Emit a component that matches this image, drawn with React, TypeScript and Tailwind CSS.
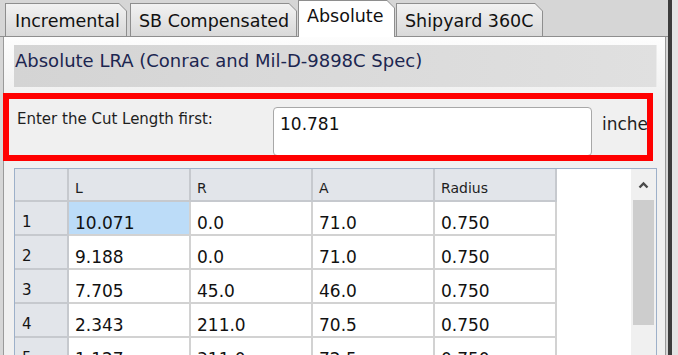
const rows = [
  { n: "1", l: "10.071", r: "0.0", a: "71.0", rad: "0.750", sel: true },
  { n: "2", l: "9.188", r: "0.0", a: "71.0", rad: "0.750" },
  { n: "3", l: "7.705", r: "45.0", a: "46.0", rad: "0.750" },
  { n: "4", l: "2.343", r: "211.0", a: "70.5", rad: "0.750" },
  { n: "5", l: "1.127", r: "311.0", a: "72.5", rad: "0.750" },
];

const clipOuter = "[clip-path:polygon(0_0,calc(100%_-_8px)_0,100%_8px,100%_100%,0_100%)]";
const clipInner = "[clip-path:polygon(0_0,calc(100%_-_7px)_0,100%_7px,100%_100%,0_100%)]";

function Tab({ label, w, pl, active }: { label: string; w: string; pl: string; active?: boolean }) {
  if (active) {
    return (
      <div className={`${w} h-[37px] -mb-px relative z-10 bg-[#8e8e8e] px-px pt-px ${clipOuter}`}>
        <div className={`h-full bg-white ${pl} pt-[4px] ${clipInner}`}>
          <span className="text-[17.5px] leading-[20px] text-[#111] whitespace-nowrap">{label}</span>
        </div>
      </div>
    );
  }
  return (
    <div className={`${w} h-[33px] mt-[3px] bg-[#8e8e8e] px-px pt-px ${clipOuter}`}>
      <div className={`h-full bg-linear-to-b from-[#f2f2f2] to-[#d9d9d9] ${pl} pt-[6px] ${clipInner}`}>
        <span className="text-[17.5px] leading-[20px] text-[#111] whitespace-nowrap">{label}</span>
      </div>
    </div>
  );
}

export default function App() {
  return (
    <div className="relative w-[678px] h-[355px] overflow-hidden flex bg-[#d6d6d6] font-['DejaVu_Sans',sans-serif]">
      <div className="w-[668px] flex flex-col">
        {/* tab strip */}
        <div className="h-[37px] flex items-start pl-[5px] border-b border-[#8e8e8e]">
          <Tab label="Incremental" w="w-[122px] mr-[3px]" pl="pl-[9px]" />
          <Tab label="SB Compensated" w="w-[167px] mr-px" pl="pl-[8px]" />
          <Tab label="Absolute" w="w-[97px] mr-px" pl="pl-[8px]" active />
          <Tab label="Shipyard 360C" w="w-[147px]" pl="pl-[8px]" />
        </div>

        {/* tab content */}
        <div className="flex-1 ml-[3px] mr-[2px] border-l border-r border-[#9a9a9a] bg-linear-to-b from-[#fdfdfd] to-[#f0f0f0] to-20% pl-[10px] pr-[8px] flex flex-col overflow-hidden">
          <div className="mt-[8px] h-[42px] shrink-0 bg-linear-to-r from-[#d4d4d4] to-[#e0e0e0] border-r border-[#ececec] pl-px pt-[5px]">
            <span className="text-[18px] leading-[20px] text-[#1c2650] whitespace-nowrap">
              Absolute LRA (Conrac and Mil-D-9898C Spec)
            </span>
          </div>

          <div className="pt-[20px] mr-[9px] flex items-start shrink-0 overflow-hidden">
            <div className="w-[259px] shrink-0 pl-[3px] pt-[3px] text-[15px] leading-[18px] text-[#1e1e1e] whitespace-nowrap">
              Enter the Cut Length first:
            </div>
            <div className="w-[319px] h-[49px] shrink-0 bg-white border border-[#a8a8a8] rounded-[4px] pl-[6px] pt-[6px] text-[17px] leading-[20px] text-[#111]">
              10.781
            </div>
            <div className="ml-[10px] pt-[7px] text-[17px] leading-[20px] text-[#1e1e1e] whitespace-nowrap">
              inches
            </div>
          </div>

          {/* table */}
          <div className="mt-[12px] flex-1 border border-[#9db0c9] bg-white flex">
            <div className="w-[616px] flex flex-col">
              <div className="h-[33px] flex shrink-0 text-[14px] leading-[17px] text-[#1e1e1e]">
                <div className="w-[54px] bg-[#e2e5ea] border-r-2 border-b-2 border-[#c6c9ce]" />
                {["L", "R", "A", "Radius"].map((h) => (
                  <div key={h} className="w-[122px] bg-[#e2e5ea] border-r-2 border-b-2 border-[#c6c9ce] pl-[6px] pt-[11px]">
                    {h}
                  </div>
                ))}
              </div>
              {rows.map((r) => (
                <div key={r.n} className="h-[34px] flex shrink-0">
                  <div className="w-[54px] bg-[#e2e5ea] border-r-2 border-b-2 border-[#c6c9ce] pl-[7px] pt-[11px] text-[15px] leading-[18px] text-[#141414]">
                    {r.n}
                  </div>
                  {[r.l, r.r, r.a, r.rad].map((v, i) => (
                    <div
                      key={i}
                      className={`w-[122px] border-r-2 border-b-2 border-[#d2d2d2] pl-[6px] pt-[11px] text-[17px] leading-[20px] text-[#111] ${
                        r.sel && i === 0 ? "bg-[#bcdcf8]" : "bg-white"
                      }`}
                    >
                      {v}
                    </div>
                  ))}
                </div>
              ))}
            </div>
            <div className="flex-1 bg-white" />
            {/* scrollbar */}
            <div className="w-[25px] bg-[#f0f0f0] flex flex-col">
              <div className="h-[31px] flex items-center justify-center">
                <svg width="11" height="8" viewBox="0 0 11 8">
                  <path d="M1.5 6.5 L5.5 2.5 L9.5 6.5" fill="none" stroke="#4a4a4a" strokeWidth="2.4" />
                </svg>
              </div>
              <div className="mx-[2px] h-[125px] bg-[#cdcdcd]" />
            </div>
          </div>
        </div>
      </div>
      <div className="w-[4px] bg-[#3c3c3c]" />
      <div className="flex-1 bg-[#e4e4e4]" />

      {/* red annotation */}
      <div className="absolute left-[3px] top-[93px] w-[650px] h-[68px] border-[6px] border-[#ff0000]" />
    </div>
  );
}
